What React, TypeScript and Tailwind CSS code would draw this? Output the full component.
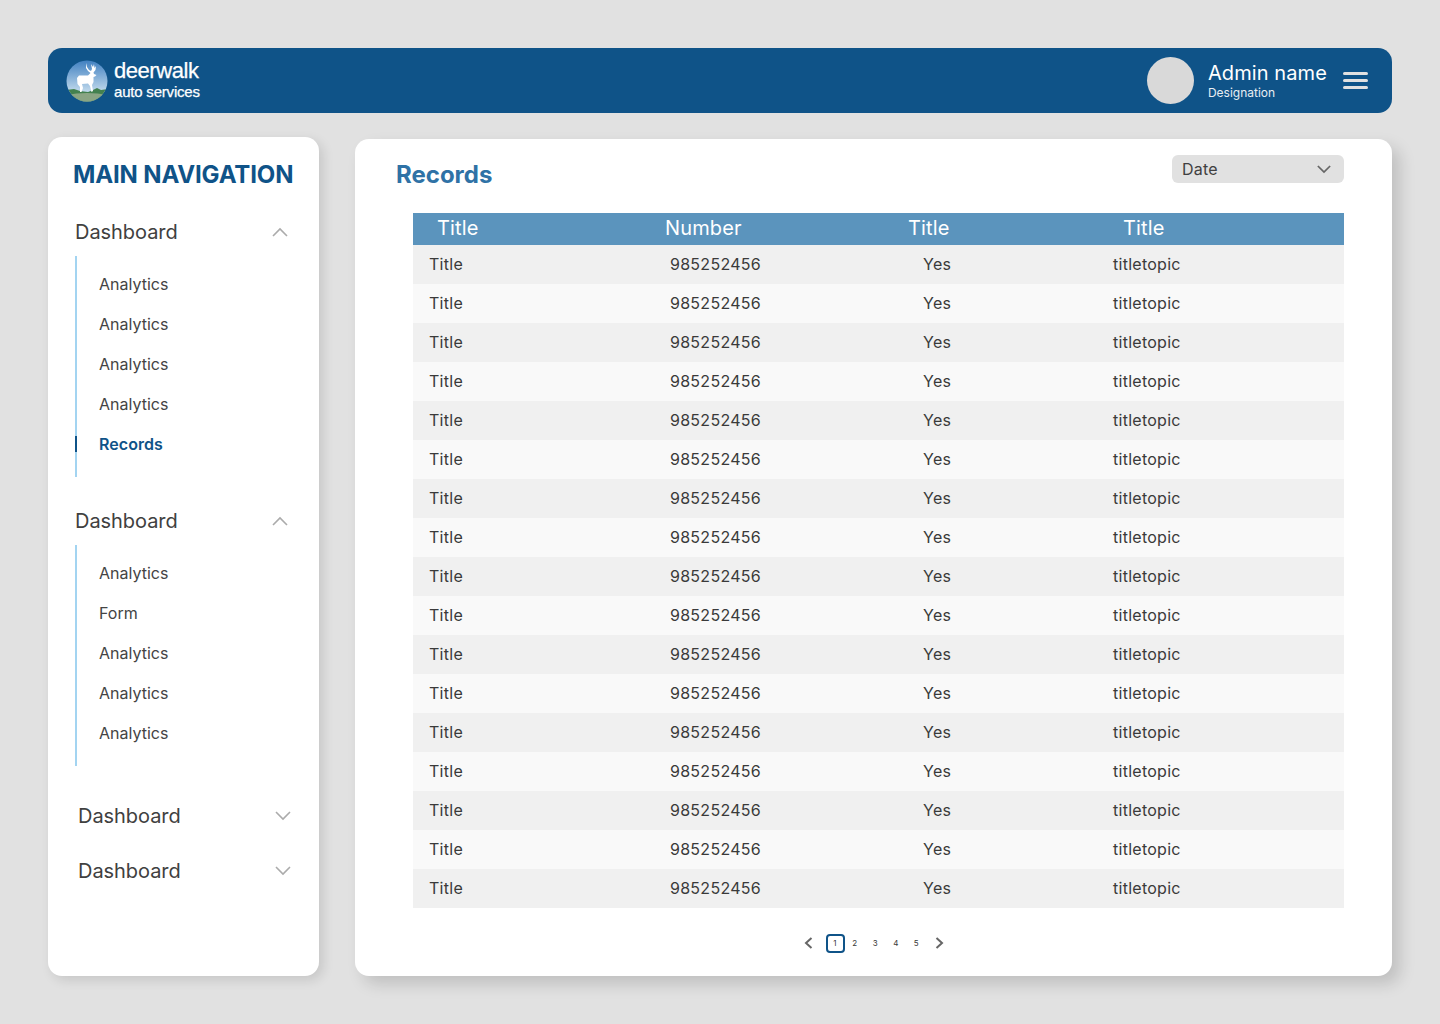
const GROUP_ONE = ['Analytics', 'Analytics', 'Analytics', 'Analytics', 'Records'];
const GROUP_TWO = ['Analytics', 'Form', 'Analytics', 'Analytics', 'Analytics'];
const ROWS = Array.from({ length: 17 }, (_, i) => i);
const PAGES = [2, 3, 4, 5];

function DeerLogo() {
  return (
    <svg width="42" height="42" viewBox="0 0 42 42" className="shrink-0">
      <defs>
        <linearGradient id="sky" x1="0" y1="0" x2="0" y2="1">
          <stop offset="0" stopColor="#3f7fc0" />
          <stop offset="0.75" stopColor="#c0d9ec" />
        </linearGradient>
        <clipPath id="disc">
          <circle cx="21" cy="21" r="20.5" />
        </clipPath>
      </defs>
      <g clipPath="url(#disc)">
        <rect width="42" height="42" fill="url(#sky)" />
        <path d="M0 30 L8 29 L14 31 L22 32 L27 30 L31 28 L35 30 L42 29 V42 H0 Z" fill="#43814f" />
        <path d="M0 35 Q21 31 42 35 V42 H0 Z" fill="#8aa583" />
        <path
          d="M20 3 L21 7 L23 10 L25 11 L26 9 L25 4 L27 7 L28 4 L28.5 8 L30 6 L29.5 10 L27.5 12.5 L28 14 L30.5 15 L29 16.5 L27.5 17 L27.5 22 L26 25 L27 31 L25.5 32 L24 26 L22 23.5 L16 24 L17 28 L15.5 32 L14 32 L14 27 L11.5 24 L11 18 L13 15.5 L22 15.5 L24.5 13 L22 11 L20 8 Z"
          fill="#ffffff"
        />
      </g>
    </svg>
  );
}

function Caret({ up, weight = 1.6, className }: { up?: boolean; weight?: number; className: string }) {
  return (
    <svg viewBox="0 0 16 10" fill="none" className={className}>
      <path d={up ? 'M1 9 L8 2 L15 9' : 'M1 1 L8 8 L15 1'} stroke="currentColor" strokeWidth={weight} />
    </svg>
  );
}

function NavGroup({ items, className }: { items: string[]; className: string }) {
  return (
    <div className={className}>
      <div className="flex items-center justify-between pl-[2px] pr-[4px] h-[30px]">
        <span className="text-[20px] text-[#404040] tracking-[-0.05px]">Dashboard</span>
        <Caret up className="w-[16px] h-[10px] text-[#ababab]" />
      </div>
      <div className="mt-[9px] ml-[2px] border-l-2 border-[#a3d4f1] pt-[8px] pb-[13px]">
        {items.map((item, i) => {
          const active = item === 'Records';
          return (
            <div key={i} className="relative h-[40px] flex items-center pl-[22px]">
              {active && <span className="absolute -left-[2px] top-[12px] w-[2px] h-[16px] bg-[#0f5388]" />}
              <span className={active ? 'text-[16px] font-semibold text-[#0f5388] tracking-[0.05px]' : 'text-[16px] text-[#444444]'}>{item}</span>
            </div>
          );
        })}
      </div>
    </div>
  );
}

function ClosedGroup({ className }: { className: string }) {
  return (
    <div className={`flex items-center justify-between pl-[5px] pr-[1px] h-[30px] ${className}`}>
      <span className="text-[20px] text-[#404040] tracking-[-0.05px]">Dashboard</span>
      <Caret className="w-[16px] h-[10px] text-[#ababab]" />
    </div>
  );
}

export default function App() {
  return (
    <div className="w-[1440px] h-[1024px] bg-[#e1e1e1] p-[48px] font-['Inter',sans-serif]">
      <header className="h-[65px] rounded-[14px] bg-[#0f5388] flex items-center justify-between pl-[18px] pr-[24px]">
        <div className="flex items-center gap-[6px]">
          <DeerLogo />
          <div className="flex flex-col text-white font-['Liberation_Sans',sans-serif] -mt-[2px] [-webkit-text-stroke:0.25px_white]">
            <span className="text-[22px] leading-[24px] tracking-[-0.45px]">deerwalk</span>
            <span className="text-[15px] leading-[18px] tracking-[-0.2px]">auto services</span>
          </div>
        </div>
        <div className="flex items-center">
          <div className="w-[47px] h-[47px] rounded-full bg-[#d9d9d9]" />
          <div className="ml-[14px] flex flex-col text-white">
            <span className="text-[20px] leading-[24px] tracking-[0.1px]">Admin name</span>
            <span className="text-[12px] leading-[15px] text-[#e8eef3]">Designation</span>
          </div>
          <div className="ml-[16px] w-[25px] flex flex-col gap-[4px]">
            <span className="h-[3px] rounded-full bg-[#e1e1e1]" />
            <span className="h-[3px] rounded-full bg-[#e1e1e1]" />
            <span className="h-[3px] rounded-full bg-[#e1e1e1]" />
          </div>
        </div>
      </header>

      <div className="flex items-start mt-[24px]">
        <aside className="w-[271px] h-[839px] shrink-0 bg-white rounded-[14px] shadow-[4px_4px_12px_rgba(0,0,0,0.12)] pl-[25px] pr-[27px] pt-[22px]">
          <h2 className="text-[24px] leading-[32px] font-bold text-[#0f5388] whitespace-nowrap tracking-[-0.15px]">MAIN NAVIGATION</h2>
          <NavGroup items={GROUP_ONE} className="mt-[26px]" />
          <NavGroup items={GROUP_TWO} className="mt-[29px]" />
          <ClosedGroup className="mt-[35px]" />
          <ClosedGroup className="mt-[25px]" />
        </aside>

        <main className="ml-[36px] mt-[2px] w-[1037px] h-[837px] bg-white rounded-[14px] shadow-[8px_8px_16px_rgba(0,0,0,0.15)] pl-[58px] pr-[48px] pt-[16px]">
          <div className="flex items-start justify-between h-[58px]">
            <h1 className="-ml-[17px] mt-[4px] text-[24px] leading-[32px] font-bold text-[#2f72a6]">Records</h1>
            <div className="w-[172px] h-[28px] rounded-[6px] bg-[#e1e1e1] flex items-center justify-between pl-[10px] pr-[13px]">
              <span className="text-[16px] text-[#404040] tracking-[0.2px]">Date</span>
              <Caret weight={2} className="w-[14px] h-[9px] text-[#666666]" />
            </div>
          </div>

          <div className="grid grid-cols-[228px_243px_215px_1fr] h-[32px] items-center bg-[#5b94bd] pl-[24px] pb-[7px] text-[20px] tracking-[0.15px] text-white">
            <span>Title</span>
            <span>Number</span>
            <span>Title</span>
            <span>Title</span>
          </div>
          {ROWS.map((i) => (
            <div
              key={i}
              className={`grid grid-cols-[241px_253px_190px_1fr] h-[39px] items-center pl-[16px] pb-[2px] text-[16px] tracking-[0.27px] text-[#3a3a3a] ${i % 2 === 0 ? 'bg-[#f0f0f0]' : 'bg-[#f9f9f9]'}`}
            >
              <span>Title</span>
              <span>985252456</span>
              <span>Yes</span>
              <span>titletopic</span>
            </div>
          ))}

          <div className="flex items-center justify-center mt-[25px] h-[20px] text-[8px] text-[#3a3a3a] pr-[10px]">
            <svg viewBox="0 0 9 12" fill="none" className="w-[9px] h-[12px] text-[#666666]">
              <path d="M7.5 1 L2 6 L7.5 11" stroke="currentColor" strokeWidth="2" />
            </svg>
            <span className="ml-[13px] w-[19px] h-[19px] rounded-[4px] border-2 border-[#0f5388] flex items-center justify-center">1</span>
            {PAGES.map((p) => (
              <span key={p} className="w-[20.5px] text-center">{p}</span>
            ))}
            <svg viewBox="0 0 9 12" fill="none" className="ml-[8px] w-[9px] h-[12px] text-[#666666]">
              <path d="M1.5 1 L7 6 L1.5 11" stroke="currentColor" strokeWidth="2" />
            </svg>
          </div>
        </main>
      </div>
    </div>
  );
}
